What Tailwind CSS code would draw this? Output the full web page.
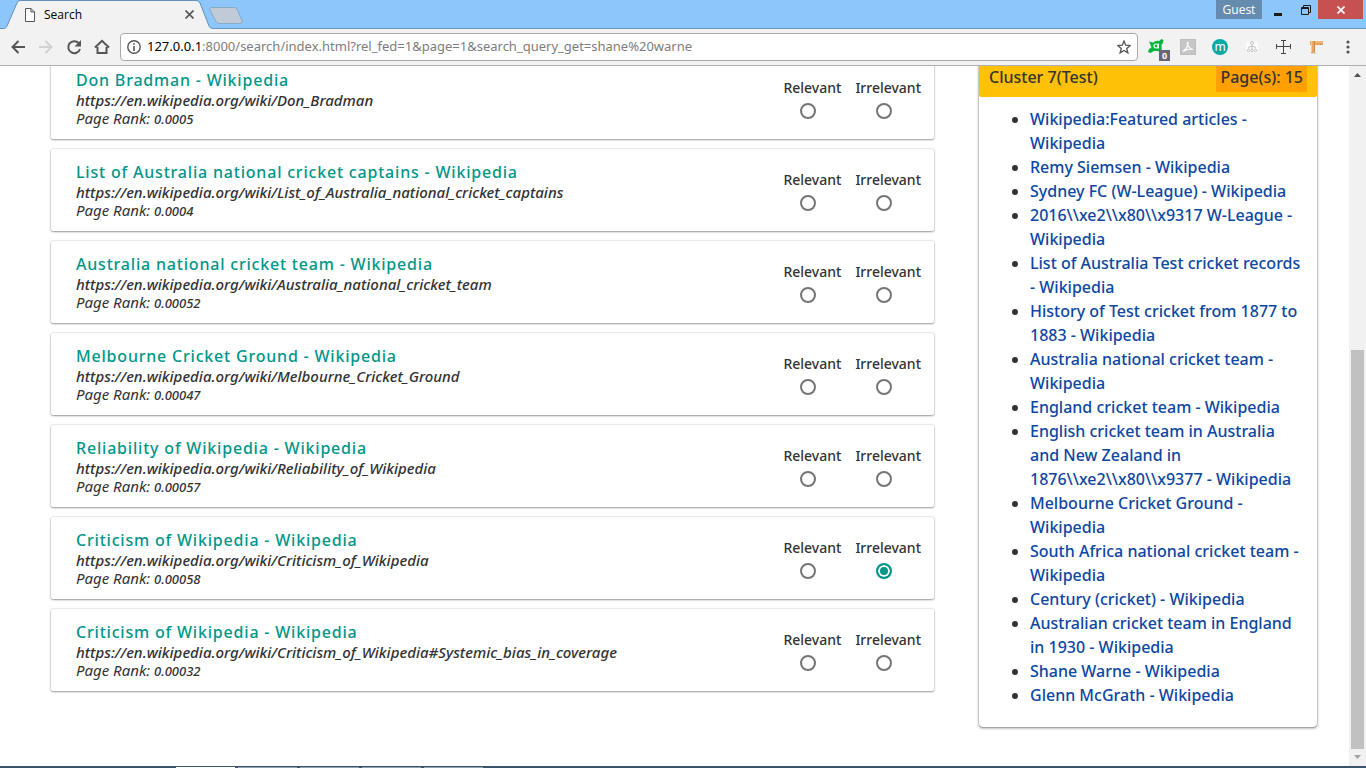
<!DOCTYPE html>
<html lang="en">
<head>
<meta charset="utf-8">
<title>Search</title>
<script src="https://cdn.jsdelivr.net/npm/@tailwindcss/browser@4"></script>
</head>
<body class="flex h-screen flex-col overflow-hidden bg-white font-['Noto_Sans','Open_Sans',sans-serif] text-[#333333]">

<!-- Tab strip -->
<header class="relative flex h-[29px] shrink-0 items-end justify-between border-b border-[#6b96bd] bg-[#8cc6fb] font-['Open_Sans',sans-serif]">
  <div class="flex items-end">
    <div class="relative -mb-px h-[29px] w-[213px]">
      <svg class="absolute inset-0" width="213" height="29" viewBox="0 0 213 29" aria-hidden="true"><path d="M0 29V28H4Q6 28 7 26L17 3Q18 .5 20 .5H196Q199 .5 200 3L209 26Q210 28 213 28.500V29Z" fill="#f2f2f2"/><path d="M0 28.500H4Q6 28.500 7 26L17 3Q18 .5 20 .5H196Q199 .5 200 3L209 26Q210 28.500 213 28.500" fill="none" stroke="#6190bb"/></svg>
      <div class="relative flex h-[29px] items-center pl-[25px] pr-4 text-xs text-black">
        <svg width="10" height="14" viewBox="0 0 10 14" fill="#fff" stroke="#555" aria-hidden="true"><path d="M.5.500H6L9.500 4V13.500H.5ZM6 .5V4H9.500"/></svg>
        <span class="flex-1 pl-[9px]">Search</span>
        <button class="grid size-4 place-items-center" aria-label="Close tab"><svg width="9" height="9" viewBox="0 0 9 9" stroke="#5a5a5a" stroke-width="1.700"><path d="M.5.500L8.500 8.500M8.500.500L.5 8.500"/></svg></button>
      </div>
    </div>
    <button class="mb-1 -ml-1 h-[17px] w-[35px]" aria-label="New tab"><svg width="35" height="17" viewBox="0 0 35 17"><path d="M3 .5H25Q27 .5 28 2L33 14Q34 16.500 32 16.500H10Q8 16.500 7 14.500L1 3Q0 .5 3 .5Z" fill="#c0cbd7" stroke="#86abc9"/></svg></button>
  </div>
  <div class="flex h-full items-start pr-[3px]">
    <button class="h-[19px] w-[46px] bg-[#658cae] text-xs leading-[18px] text-white">Guest</button>
    <button class="grid h-[19px] w-8 place-items-center" aria-label="Minimize"><svg width="8" height="13" viewBox="0 0 8 13"><path d="M0 10H8V13H0Z" fill="#1b1b1b"/></svg></button>
    <button class="grid h-[19px] w-[24px] place-items-center" aria-label="Restore"><svg width="10" height="10" viewBox="0 0 10 10" fill="none" stroke="#1b1b1b"><path d="M.5 2.500H7.500V9.500H.5ZM.5 3.500H7.500M2.500 2V.5H9.500V7.500H8"/></svg></button>
    <button class="grid h-[19px] w-[45px] place-items-center bg-[#c75050]" aria-label="Close"><svg width="8" height="8" viewBox="0 0 8 8" stroke="#fff" stroke-width="1.800"><path d="M.5.500L7.500 7.500M7.500.500L.5 7.500"/></svg></button>
  </div>
</header>

<!-- Toolbar -->
<nav class="flex h-[37px] shrink-0 items-center border-b border-[#b0b0b0] bg-[#f2f2f2] px-[10px]" aria-label="Browser toolbar">
  <div class="flex w-[110px] shrink-0 items-center gap-3">
    <button class="grid size-4 place-items-center" aria-label="Back"><svg width="16" height="16" viewBox="0 0 16 16" fill="none" stroke="#555" stroke-width="2"><path d="M15 8H2.500M8.500 2L2.500 8L8.500 14"/></svg></button>
    <button class="grid size-4 place-items-center" aria-label="Forward"><svg width="16" height="16" viewBox="0 0 16 16" fill="none" stroke="#d2d2d2" stroke-width="2"><path d="M1 8H13.500M7.500 2L13.500 8L7.500 14"/></svg></button>
    <button class="grid size-4 place-items-center" aria-label="Reload"><svg width="16" height="16" viewBox="0 0 16 16"><path d="M12.800 4.200A6 6 0 1 0 14 10" fill="none" stroke="#555" stroke-width="2"/><path d="M15 1V7.500H8.500Z" fill="#555"/></svg></button>
    <button class="grid size-4 place-items-center" aria-label="Home"><svg width="16" height="16" viewBox="0 0 16 16" fill="none" stroke="#555" stroke-width="2"><path d="M1 8.500L8 1.800L15 8.500M3.500 8V14H12.500V8"/></svg></button>
  </div>
  <div class="flex h-7 flex-1 items-center rounded-sm border border-[#a9a9a9] bg-white px-[6px]">
    <svg width="14" height="14" viewBox="0 0 14 14" aria-hidden="true"><circle cx="7" cy="7" r="6.200" fill="none" stroke="#555" stroke-width="1.400"/><path d="M6.200 3.200H7.800V4.800H6.200ZM6.200 6H7.800V11H6.200Z" fill="#555"/></svg>
    <div class="min-w-0 flex-1 truncate pl-[6px] text-[13px] text-[#7d7d7d]"><span class="text-black">127.0.0.1</span>:8000/search/index.html?rel_fed=1&amp;page=1&amp;search_query_get=shane%20warne</div>
    <button aria-label="Bookmark this page"><svg width="14" height="14" viewBox="0 0 14 14" fill="none" stroke="#555" stroke-width="1.300"><path d="M7 1L8.700 5.200L13.200 5.500L9.700 8.400L10.900 12.900L7 10.400L3.100 12.900L4.300 8.400L.8 5.500L5.300 5.200Z"/></svg></button>
  </div>
  <div class="flex shrink-0 items-center gap-4 pl-[10px]">
    <button class="relative size-4" aria-label="Ad blocker">
      <svg width="16" height="16" viewBox="0 0 16 16"><path d="M1 2.500L5 3.500Q8 1 11 2L13.500 0L15.500 1L15 4L13.500 5.500Q13.500 9 14 13L9 12L6 12L2.500 14L0 13L1 10L3.500 8.500Z" fill="#08b53e"/><circle cx="8" cy="7" r="2" fill="none" stroke="#fff" stroke-width="1.200"/><path d="M10.300 4.500V9.500" stroke="#fff" stroke-width="1.200"/></svg>
      <span class="absolute left-[11px] top-[11px] h-[11px] w-[11px] bg-[#6b6475] text-center text-[9px] font-bold leading-[11px] text-white">0</span>
    </button>
    <button class="size-4" aria-label="PDF"><svg width="16" height="16" viewBox="0 0 16 16"><path d="M0 0H16V16H0Z" fill="#bdbdbd"/><path d="M1 1H15V15H1Z" fill="#c6c6c6"/><path d="M3 12.500Q6.500 10 7.500 7Q7 3 7.800 3Q8.500 3.500 7.800 6.500Q9.500 9.500 13 10.500Q8.500 9 3 12.500Z" fill="none" stroke="#fafafa" stroke-width="1.200"/></svg></button>
    <button class="grid size-4 place-items-center rounded-full bg-[#08aaa7] text-[12px] leading-none text-white">m</button>
    <button class="size-4" aria-label="Site map"><svg width="16" height="16" viewBox="0 0 16 16" fill="none" stroke="#c4c4c4"><rect x="2" y="2" width="12" height="12" rx="2" fill="#fafafa" stroke="none"/><circle cx="8" cy="4" r="1.500"/><path d="M8 6V10M4.500 9.500Q4.500 7.500 6 7.500H10Q11.500 7.500 11.500 9.500"/><circle cx="4.500" cy="11.500" r="1.300"/><circle cx="8" cy="11.500" r="1.300"/><circle cx="11.500" cy="11.500" r="1.300"/></svg></button>
    <button class="size-4" aria-label="Crosshair"><svg width="16" height="16" viewBox="0 0 16 16" fill="none" stroke="#444"><path d="M7.500 1V15M.5 7.500H15M5 1.500H10M5 14.500H10M.5 5V10M14.500 5V10"/></svg></button>
    <button class="size-4" aria-label="Ruler"><svg width="16" height="16" viewBox="0 0 16 16"><path d="M3 14H9V15H3Z" fill="#d9d9d9"/><path d="M2 2H15V6H7V14H3V6H2Z" fill="#eba55f"/><path d="M7 3H15M3.500 2V13" stroke="#f7c995"/><path d="M6.500 2V13M9.500 5V6M12.500 5V6" stroke="#c98846"/></svg></button>
    <button class="grid size-4 place-items-center" aria-label="Menu"><svg width="4" height="14" viewBox="0 0 4 14" fill="#555"><circle cx="2" cy="2" r="1.600"/><circle cx="2" cy="7" r="1.600"/><circle cx="2" cy="12" r="1.600"/></svg></button>
  </div>
</nav>

<div class="flex min-h-0 flex-1">
  <!-- Page, scrolled towards its end -->
  <div class="flex min-w-0 flex-1 items-start gap-[45px] overflow-hidden pl-[51px] pr-8">
    <main id="results" class="-mt-[9px] flex min-w-0 flex-1 flex-col gap-[10px]"></main>
    <aside class="-mt-[9px] w-[338px] shrink-0 rounded-sm bg-white shadow-[0_1px_3px_rgba(0,0,0,0.5),0_0_1px_rgba(0,0,0,0.5)]">
      <h2 class="flex h-10 items-center justify-between rounded-b-xs bg-[#ffc107] pl-[10px] pr-[10px] text-base font-medium"><span>Cluster 7(Test)</span><span class="bg-[#ffa000] px-1 leading-[30px]">Page(s): 15</span></h2>
      <ul class="list-disc pb-5 pl-[51px] pr-3 pt-[10px] text-base font-medium">
        <li><a href="#" class="text-[#0d47a1]">Wikipedia:Featured articles - Wikipedia</a></li>
        <li><a href="#" class="text-[#0d47a1]">Remy Siemsen - Wikipedia</a></li>
        <li><a href="#" class="text-[#0d47a1]">Sydney FC (W-League) - Wikipedia</a></li>
        <li><a href="#" class="text-[#0d47a1]">2016\\xe2\\x80\\x9317 W-League - Wikipedia</a></li>
        <li><a href="#" class="text-[#0d47a1]">List of Australia Test cricket records - Wikipedia</a></li>
        <li><a href="#" class="text-[#0d47a1]">History of Test cricket from 1877 to 1883 - Wikipedia</a></li>
        <li><a href="#" class="text-[#0d47a1]">Australia national cricket team - Wikipedia</a></li>
        <li><a href="#" class="text-[#0d47a1]">England cricket team - Wikipedia</a></li>
        <li><a href="#" class="text-[#0d47a1]">English cricket team in Australia and New Zealand in 1876\\xe2\\x80\\x9377 - Wikipedia</a></li>
        <li><a href="#" class="text-[#0d47a1]">Melbourne Cricket Ground - Wikipedia</a></li>
        <li><a href="#" class="text-[#0d47a1]">South Africa national cricket team - Wikipedia</a></li>
        <li><a href="#" class="text-[#0d47a1]">Century (cricket) - Wikipedia</a></li>
        <li><a href="#" class="text-[#0d47a1]">Australian cricket team in England in 1930 - Wikipedia</a></li>
        <li><a href="#" class="text-[#0d47a1]">Shane Warne - Wikipedia</a></li>
        <li><a href="#" class="text-[#0d47a1]">Glenn McGrath - Wikipedia</a></li>
      </ul>
    </aside>
  </div>

  <!-- Scrollbar -->
  <div class="flex w-[17px] shrink-0 flex-col items-center justify-between bg-[#f1f1f1] py-[7px]" aria-hidden="true">
    <svg width="7" height="4" viewBox="0 0 7 4"><path d="M3.500 0L7 4H0Z" fill="#505050"/></svg>
    <div class="flex w-[13px] flex-1 flex-col justify-end pb-[6px]"><div class="h-[59.4%] bg-[#c1c1c1]"></div></div>
    <svg width="7" height="4" viewBox="0 0 7 4"><path d="M3.500 4L7 0H0Z" fill="#a3a3a3"/></svg>
  </div>
</div>

<!-- Edge of the task bar -->
<footer class="flex h-[2px] shrink-0 items-end gap-[3px] bg-[#3b546c] pl-[176px]">
  <div class="h-px w-[59px] bg-white"></div>
  <div class="h-px w-[59px] bg-[#93a1ae]"></div>
  <div class="h-px w-[59px] bg-[#93a1ae]"></div>
  <div class="h-px w-[59px] bg-[#93a1ae]"></div>
  <div class="h-px w-[59px] bg-[#93a1ae]"></div>
</footer>

<script>
const results = [
  ["Don Bradman - Wikipedia", "Don_Bradman", "0.0005"],
  ["List of Australia national cricket captains - Wikipedia", "List_of_Australia_national_cricket_captains", "0.0004"],
  ["Australia national cricket team - Wikipedia", "Australia_national_cricket_team", "0.00052"],
  ["Melbourne Cricket Ground - Wikipedia", "Melbourne_Cricket_Ground", "0.00047"],
  ["Reliability of Wikipedia - Wikipedia", "Reliability_of_Wikipedia", "0.00057"],
  ["Criticism of Wikipedia - Wikipedia", "Criticism_of_Wikipedia", "0.00058", true],
  ["Criticism of Wikipedia - Wikipedia", "Criticism_of_Wikipedia#Systemic_bias_in_coverage", "0.00032"]
];
const option = (i, name, checked) => `
  <label class="flex flex-col items-center gap-1 text-sm leading-[22px] font-medium" for="${name}-${i}">${name}
    <input type="radio" id="${name}-${i}" name="feedback-${i}" ${checked ? "checked" : ""} class="mr-2 size-4 appearance-none rounded-full border-2 border-[#757575] checked:border-[#009688] checked:bg-[#009688] checked:shadow-[inset_0_0_0_2px_white]">
  </label>`;
document.getElementById("results").innerHTML = results.map(([title, path, rank, irrelevant], i) => `
  <article class="flex justify-between rounded-xs bg-white py-3 pl-[25px] pr-[13px] shadow-[0_1px_2px_rgba(0,0,0,0.35),0_0_2px_rgba(0,0,0,0.25)]">
    <div>
      <h3 class="text-base leading-[22px] font-medium tracking-wider"><a href="#" class="text-[#009688]">${title}</a></h3>
      <p class="text-[15px] leading-[18px] font-medium italic">https://en.wikipedia.org/wiki/${path}</p>
      <p class="text-[15px] leading-[18px] italic">Page Rank: <span class="text-[13px] leading-none font-medium">${rank}</span></p>
    </div>
    <fieldset class="flex gap-[14px] pt-2">${option(i, "Relevant", false)}${option(i, "Irrelevant", irrelevant)}</fieldset>
  </article>`).join("");
</script>
</body>
</html>
